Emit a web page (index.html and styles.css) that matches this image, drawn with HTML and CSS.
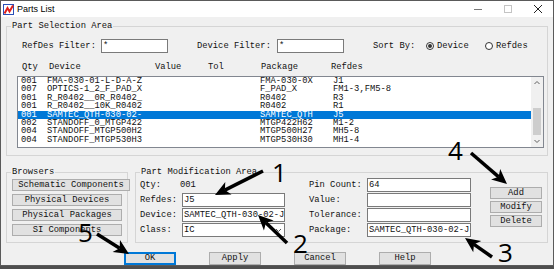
FILE: index.html
```html
<!DOCTYPE html>
<html lang="en">

<head>
    <meta charset="UTF-8">
    <meta name="viewport" content="width=device-width, initial-scale=1.0">
    <title>Parts List</title>
    <link rel="stylesheet" href="styles.css">
</head>

<body>
    <div class="window">
        <div class="titlebar">
            <svg class="app-icon" viewBox="0 0 11 11">
                <rect x="0.5" y="0.5" width="10" height="10" fill="#fff" stroke="#2a4fb8" />
                <path d="M1.5 9.5 L4.5 4 L6.5 7.5 L10 1.5" stroke="#e0201c" stroke-width="2" fill="none" />
            </svg>
            <span class="title">Parts List</span>
            <div class="controls">
                <svg viewBox="0 0 30 16"><line x1="11" y1="8.5" x2="19" y2="8.5" stroke="#777" /></svg>
                <svg viewBox="0 0 30 16"><rect x="11.5" y="4.5" width="7" height="7" fill="none" stroke="#c4c4c4" /></svg>
                <svg viewBox="0 0 30 16">
                    <path d="M11 4 L19 12 M19 4 L11 12" stroke="#222" fill="none" />
                </svg>
            </div>
        </div>

        <div class="client">
            <div class="group selection">
                <div class="legend">Part Selection Area</div>
                <div class="filters">
                    <span class="lbl refdes-lbl">RefDes Filter:</span>
                    <div class="field filter">*</div>
                    <span class="lbl device-lbl">Device Filter:</span>
                    <div class="field filter">*</div>
                    <span class="lbl sort-lbl">Sort By:</span>
                    <span class="radio checked"></span>
                    <span class="radio-text">Device</span>
                    <span class="radio"></span>
                    <span class="radio-text">Refdes</span>
                </div>
                <div class="head">
                    <span>Qty</span><span>Device</span><span>Value</span><span>Tol</span><span>Package</span><span>Refdes</span>
                </div>
                <div class="listbox">
                    <div class="rows">
                        <div class="row"><span>001</span><span>FMA-030-01-L-D-A-Z</span><span>FMA-030-0X</span><span>J1</span></div>
                        <div class="row"><span>007</span><span>OPTICS-1_2_F_PAD_X</span><span>F_PAD_X</span><span>FM1-3,FM5-8</span></div>
                        <div class="row"><span>001</span><span>R_R0402__0R_R0402_</span><span>R0402</span><span>R3</span></div>
                        <div class="row"><span>001</span><span>R_R0402__10K_R0402</span><span>R0402</span><span>R1</span></div>
                        <div class="row selected"><span>001</span><span>SAMTEC_QTH-030-02-</span><span>SAMTEC_QTH</span><span>J5</span></div>
                        <div class="row"><span>002</span><span>STANDOFF_0_MTGP422</span><span>MTGP422H62</span><span>M1-2</span></div>
                        <div class="row"><span>004</span><span>STANDOFF_MTGP500H2</span><span>MTGP500H27</span><span>MH5-8</span></div>
                        <div class="row"><span>004</span><span>STANDOFF_MTGP530H3</span><span>MTGP530H30</span><span>MH1-4</span></div>
                    </div>
                    <div class="scrollbar">
                        <svg class="scroll-arrow" viewBox="0 0 12 12"><path d="M3.5 7 L6 4.5 L8.5 7" stroke="#606060" fill="none" /></svg>
                        <div class="track"><div class="thumb"></div></div>
                        <svg class="scroll-arrow" viewBox="0 0 12 12"><path d="M3.5 5 L6 7.5 L8.5 5" stroke="#606060" fill="none" /></svg>
                    </div>
                </div>
            </div>

            <div class="lower">
                <div class="group browsers">
                    <div class="legend">Browsers</div>
                    <button class="btn wide">Schematic Components</button>
                    <button class="btn">Physical Devices</button>
                    <button class="btn">Physical Packages</button>
                    <button class="btn">SI Components</button>
                </div>

                <div class="group modify">
                    <div class="legend">Part Modification Area</div>
                    <div class="mod-body">
                        <div class="form">
                            <span>Qty:</span><span class="qty">001</span>
                            <span>Refdes:</span><div class="field">J5</div>
                            <span>Device:</span><div class="field">SAMTEC_QTH-030-02-J</div>
                            <span>Class:</span>
                            <div class="field select">
                                <span>IC</span>
                                <svg class="chevron" viewBox="0 0 7 5"><path d="M1 1 L3.5 3.5 L6 1" stroke="#555" fill="none" /></svg>
                            </div>
                        </div>
                        <div class="form right">
                            <span>Pin Count:</span><div class="field">64</div>
                            <span>Value:</span><div class="field"></div>
                            <span>Tolerance:</span><div class="field"></div>
                            <span>Package:</span><div class="field">SAMTEC_QTH-030-02-J</div>
                        </div>
                        <div class="side-buttons">
                            <button class="btn">Add</button>
                            <button class="btn">Modify</button>
                            <button class="btn">Delete</button>
                        </div>
                    </div>
                </div>
            </div>

            <div class="actions">
                <button class="btn focused">OK</button>
                <button class="btn">Apply</button>
                <button class="btn">Cancel</button>
                <button class="btn">Help</button>
            </div>
        </div>
    </div>

    <svg class="notes" width="554" height="269" viewBox="0 0 554 269">
        <g id="arrows"></g>
        <text x="272" y="182">1</text>
        <text x="293" y="253">2</text>
        <text x="498" y="262">3</text>
        <text x="448" y="160">4</text>
        <text x="78" y="242">5</text>
    </svg>

    <script>
        // tail x, tail y, tip x, tip y
        const arrows = [
            [263, 171, 215, 195],
            [287, 243, 258, 215],
            [492, 257, 465, 238],
            [471, 153, 507, 184],
            [97, 234, 129, 254]
        ]

        const ns = 'http://www.w3.org/2000/svg'
        const layer = document.getElementById('arrows')

        arrows.forEach(([x1, y1, x2, y2]) => {
            const dx = x2 - x1
            const dy = y2 - y1
            const len = Math.hypot(dx, dy)
            const ux = dx / len
            const uy = dy / len
            const nx = -uy
            const ny = ux
            const head = 15
            const half = 7
            const notch = 11
            const bx = x2 - ux * head
            const by = y2 - uy * head

            const line = document.createElementNS(ns, 'line')
            line.setAttribute('x1', x1)
            line.setAttribute('y1', y1)
            line.setAttribute('x2', x2 - ux * notch)
            line.setAttribute('y2', y2 - uy * notch)
            layer.appendChild(line)

            const tip = document.createElementNS(ns, 'polygon')
            tip.setAttribute('points', [
                `${x2},${y2}`,
                `${bx + nx * half},${by + ny * half}`,
                `${x2 - ux * notch},${y2 - uy * notch}`,
                `${bx - nx * half},${by - ny * half}`
            ].join(' '))
            layer.appendChild(tip)
        })
    </script>
</body>

</html>
```

FILE: styles.css
```css
* {
    box-sizing: border-box;
}

body {
    position: relative;
    margin: 0;
    height: 269px;
    background-color: #4e4e4e;
    font-family: 'Liberation Mono', 'DejaVu Sans Mono', monospace;
    font-size: 8.8px;
    line-height: 11px;
    color: #111;
    overflow: hidden;
}

.window {
    width: 554px;
    border: 1px solid #5a5a5a;
    background-color: #f0f0f0;
}

.titlebar {
    display: flex;
    align-items: center;
    height: 16px;
    padding-left: 2px;
    background-color: #fff;
}

.app-icon {
    width: 11px;
    height: 11px;
}

.title {
    margin-left: 3px;
    font-family: 'Liberation Sans', Arial, sans-serif;
    font-size: 9px;
    color: #000;
}

.controls {
    display: flex;
    margin-left: auto;
}

.controls svg {
    width: 30px;
    height: 16px;
}

.client {
    height: 248px;
    padding: 9px 5px 0;
}

.group {
    display: flex;
    flex-direction: column;
    align-items: flex-start;
    border: 1px solid #d5d5d5;
}

.legend {
    margin: -6px 0 0 4px;
    padding: 0 1px;
    background-color: #f0f0f0;
    white-space: pre;
}

/* part selection */
.selection {
    height: 130px;
}

.filters {
    display: flex;
    align-items: center;
    height: 14px;
    margin-top: 7px;
    padding-left: 15px;
}

.lbl {
    white-space: pre;
}

.refdes-lbl {
    width: 79px;
}

.device-lbl {
    width: 80px;
    margin-left: 29px;
}

.sort-lbl {
    width: 53px;
    margin-left: 29px;
}

.field {
    height: 14px;
    border: 1px solid #7a7a7a;
    background-color: #fff;
    padding-left: 1px;
    line-height: 12px;
    white-space: pre;
    overflow: hidden;
}

.filter {
    width: 67px;
}

.radio {
    width: 8px;
    height: 8px;
    border: 1px solid #333;
    border-radius: 50%;
    background-color: #fff;
    margin-right: 3px;
    display: flex;
    align-items: center;
    justify-content: center;
}

.radio.checked::after {
    content: '';
    width: 4px;
    height: 4px;
    border-radius: 50%;
    background-color: #333;
}

.radio-text {
    width: 48px;
}

.head {
    display: grid;
    grid-template-columns: 27px 106px 53px 53px 70px 60px;
    margin-top: 9px;
    padding-left: 15px;
}

.listbox {
    display: flex;
    width: 527px;
    height: 72px;
    margin: 3px 0 0 10px;
    border: 1px solid #828790;
    background-color: #fff;
}

.rows {
    flex: 1;
}

.row {
    display: grid;
    grid-template-columns: 26px 213px 73px 1fr;
    height: 8.4px;
    padding-left: 3px;
    line-height: 8.4px;
    white-space: pre;
}

.row.selected {
    background-color: #0078d7;
    color: #fff;
}

.scrollbar {
    display: flex;
    flex-direction: column;
    width: 12px;
    background-color: #f0f0f0;
}

.scroll-arrow {
    width: 12px;
    height: 12px;
}

.track {
    flex: 1;
    display: flex;
    justify-content: center;
}

.thumb {
    width: 8px;
    height: 27px;
    margin-top: 19px;
    background-color: #cdcdcd;
}

/* lower area */
.lower {
    display: flex;
    gap: 7px;
    margin-top: 16px;
}

.browsers {
    width: 122px;
    height: 71px;
}

.btn {
    height: 12px;
    padding: 0;
    border: 1px solid #adadad;
    background-color: #e1e1e1;
    font-family: inherit;
    font-size: 8.8px;
    line-height: 10px;
    color: #111;
    text-align: center;
    white-space: pre;
}

.browsers .btn {
    width: 110px;
    margin: 1px 0 0 5px;
}

.browsers .btn + .btn {
    margin-top: 3px;
}

.browsers .btn.wide {
    width: 118px;
}

.modify {
    width: 413px;
    height: 71px;
}

.mod-body {
    display: flex;
    align-items: flex-start;
    padding-left: 4px;
}

.form {
    display: grid;
    grid-template-columns: 42px 103px;
    grid-auto-rows: 14px;
    row-gap: 1px;
    align-items: center;
    white-space: pre;
}

.form.right {
    grid-template-columns: 58px 104px;
    margin-left: 24px;
}

.qty {
    margin-left: -2px;
}

.select {
    display: flex;
    align-items: center;
    justify-content: space-between;
    padding-right: 2px;
}

.chevron {
    width: 7px;
    height: 5px;
}

.side-buttons {
    display: flex;
    flex-direction: column;
    gap: 2px;
    width: 52px;
    margin: 9px 0 0 19px;
}

.actions {
    display: flex;
    gap: 33px;
    margin-top: 9px;
    padding-left: 118px;
}

.actions .btn {
    width: 52px;
    height: 13px;
    line-height: 11px;
}

.btn.focused {
    border-color: #0078d7;
    box-shadow: inset 0 0 0 1px #0078d7;
}

/* annotations drawn over the dialog */
.notes {
    position: absolute;
    top: 0;
    left: 0;
    pointer-events: none;
}

.notes line {
    stroke: #000;
    stroke-width: 3.5;
}

.notes polygon {
    fill: #000;
}

.notes text {
    font-family: 'Open Sans', 'Liberation Sans', sans-serif;
    font-size: 26px;
    fill: #000;
}
```
